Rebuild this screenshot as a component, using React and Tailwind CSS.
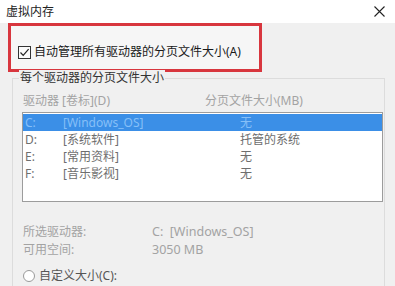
import React from "react";

const drives = [
  { letter: "C:", label: "[Windows_OS]", size: "无", selected: true },
  { letter: "D:", label: "[系统软件]", size: "托管的系统" },
  { letter: "E:", label: "[常用资料]", size: "无" },
  { letter: "F:", label: "[音乐影视]", size: "无" },
];

const CloseIcon = () => (
  <svg width="11" height="11" viewBox="0 0 11 11" fill="none">
    <path d="M0.5 0.5L10.5 10.5M10.5 0.5L0.5 10.5" stroke="#222" strokeWidth="1.1" />
  </svg>
);

const CheckBox = () => (
  <div className="w-[13px] h-[13px] border border-[#333] bg-[#fafafa] flex items-center justify-center shrink-0">
    <svg width="11" height="11" viewBox="0 0 11 11" fill="none">
      <path d="M1.5 5.5L4.2 8.3L9.6 2.2" stroke="#222" strokeWidth="1.2" />
    </svg>
  </div>
);

const DriveRow = ({ drive }) => {
  const { letter, label, size, selected } = drive;
  return (
    <div
      className={`flex h-[17px] items-center pl-[2px] ${
        selected ? "bg-[#3b8fe7] text-[#86bff7]" : "text-[#6e6e6e]"
      }`}
    >
      <span className="w-[38px]">{letter}</span>
      <span className="w-[177px]">{label}</span>
      <span>{size}</span>
    </div>
  );
};

export default function App() {
  return (
    <div className="w-[395px] h-[286px] bg-[#f0f0f0] overflow-hidden text-[12px] leading-[16px] text-[#222] font-['Noto_Sans','Noto_Sans_CJK_SC',sans-serif]">
      {/* title bar */}
      <div className="h-[23px] bg-white flex items-center justify-between pl-[6px] pr-[10px]">
        <span>虚拟内存</span>
        <CloseIcon />
      </div>

      {/* highlighted option */}
      <div className="ml-[8px] w-[254px] h-[49px] border-[3px] border-[#d8363e] bg-[#f6f6f6] flex items-end pb-[9px] pl-[7px]">
        <div className="flex items-center gap-[3px]">
          <CheckBox />
          <span className="text-[#1a1a1a]">自动管理所有驱动器的分页文件大小(A)</span>
        </div>
      </div>

      {/* per-drive group */}
      <div className="relative mt-[6px] ml-[12px] w-[373px] h-[260px] border border-[#dcdcdc] pt-[14px] pl-[10px]">
        <span className="absolute -top-[9px] left-[6px] px-[1px] bg-[#f0f0f0] text-[#333]">
          每个驱动器的分页文件大小
        </span>

        <div className="flex text-[#a3a3a3]">
          <span className="w-[182px]">驱动器 [卷标](D)</span>
          <span>分页文件大小(MB)</span>
        </div>

        <div className="mt-[3px] -ml-[1px] w-[361px] h-[90px] border border-[#9c9c9c] bg-white pt-[1px]">
          {drives.map((drive) => (
            <DriveRow key={drive.letter} drive={drive} />
          ))}
        </div>

        <div className="mt-[22px] flex flex-col gap-[2px] text-[#a3a3a3]">
          <div className="flex">
            <span className="w-[129px]">所选驱动器:</span>
            <span className="whitespace-pre text-[12.5px]">C:  [Windows_OS]</span>
          </div>
          <div className="flex">
            <span className="w-[129px]">可用空间:</span>
            <span className="text-[12.5px]">3050 MB</span>
          </div>
        </div>

        <div className="mt-[10px] flex items-center gap-[4px] text-[#555]">
          <div className="w-[12px] h-[12px] rounded-full border border-[#9a9a9a] bg-white" />
          <span>自定义大小(C):</span>
        </div>
      </div>
    </div>
  );
}
